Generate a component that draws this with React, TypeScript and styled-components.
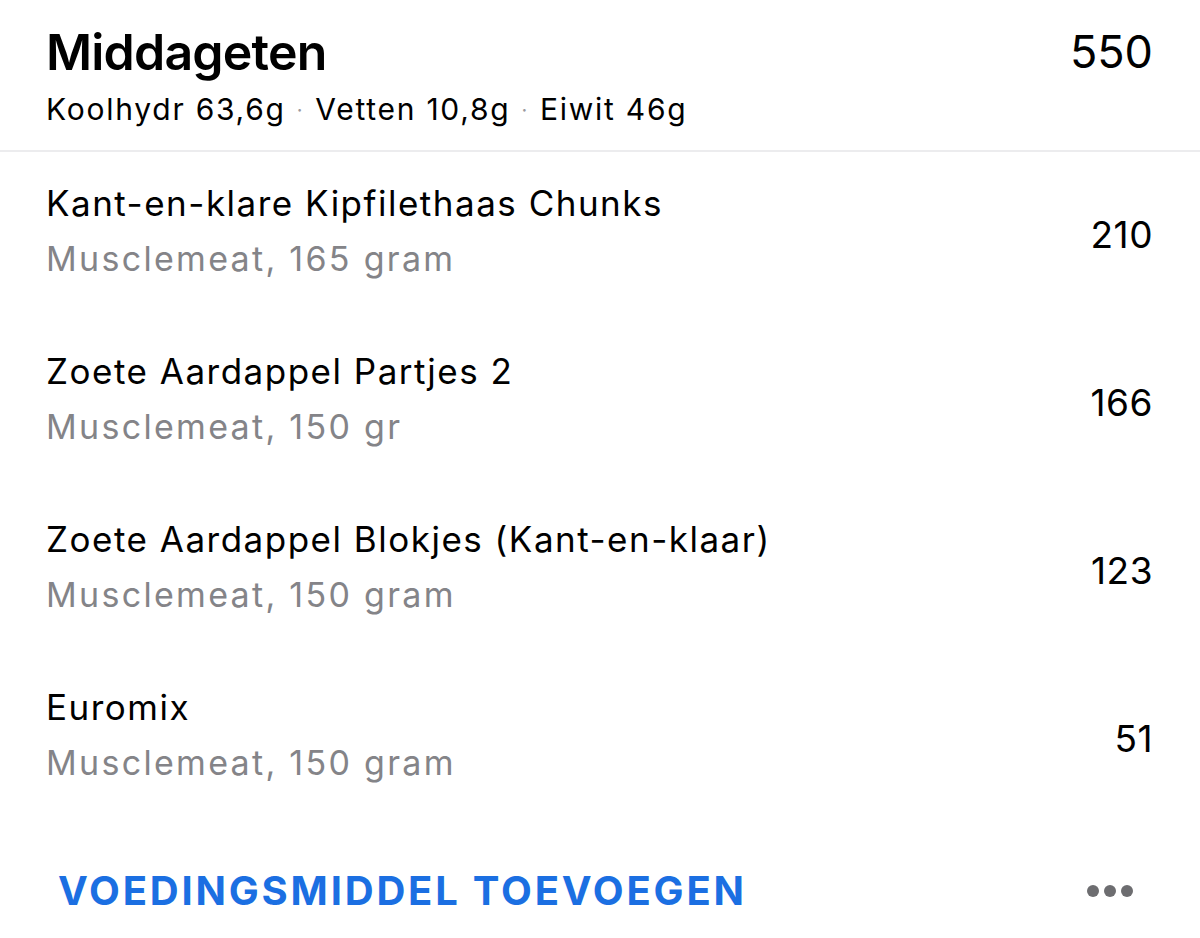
import React from "react";
import styled, { createGlobalStyle } from "styled-components";

const GlobalStyle = createGlobalStyle`
  html, body {
    margin: 0;
    padding: 0;
    background: #fff;
  }
  body {
    font-family: Inter, "Noto Sans", sans-serif;
    -webkit-font-smoothing: antialiased;
  }
`;

const Card = styled.div`
  display: flex;
  flex-direction: column;
  width: 1200px;
  background: #fff;
`;

const Header = styled.header`
  display: flex;
  justify-content: space-between;
  align-items: flex-start;
  padding: 22px 47px 20px 46px;
  border-bottom: 2px solid #ececee;
`;

const HeaderText = styled.div`
  display: flex;
  flex-direction: column;
  gap: 7px;
`;

const Title = styled.h1`
  margin: 0;
  font-size: 50px;
  font-weight: 600;
  line-height: 60px;
  letter-spacing: -0.8px;
  color: #000;
`;

const Macros = styled.div`
  font-size: 30px;
  line-height: 40px;
  letter-spacing: 1.75px;
  color: #000;
`;

const Sep = styled.span`
  color: #9a9a9e;
  margin: 0 11px;
  font-size: 20px;
  vertical-align: 3px;
`;

const Total = styled.div`
  font-size: 45px;
  line-height: 60px;
  color: #000;
`;

const FoodRow = styled.div`
  display: flex;
  justify-content: space-between;
  align-items: center;
  padding: 31px 47px 41px 46px;
`;

const Info = styled.div`
  display: flex;
  flex-direction: column;
  gap: 16px;
`;

const Name = styled.div`
  font-size: 35px;
  line-height: 40px;
  letter-spacing: 1.5px;
  color: #000;
`;

const Detail = styled.div`
  font-size: 34px;
  line-height: 40px;
  letter-spacing: 2.3px;
  color: #848488;
`;

const Kcal = styled.div`
  font-size: 37px;
  line-height: 40px;
  letter-spacing: 0.5px;
  padding-top: 8px;
  color: #000;
`;

const Footer = styled.div`
  display: flex;
  justify-content: space-between;
  align-items: center;
  height: 134px;
  padding: 0 67px 0 58px;
`;

const AddButton = styled.button`
  border: none;
  background: none;
  padding: 0;
  font-family: inherit;
  font-size: 40px;
  font-weight: 700;
  line-height: 48px;
  letter-spacing: 2.8px;
  color: #1b6fe2;
  cursor: pointer;
`;

const MoreDots = styled.div`
  display: flex;
  gap: 5px;
`;

const Dot = styled.span`
  width: 12px;
  height: 12px;
  border-radius: 50%;
  background: #6d6d70;
`;

const foods = [
  { name: "Kant-en-klare Kipfilethaas Chunks", detail: "Musclemeat, 165 gram", kcal: 210 },
  { name: "Zoete Aardappel Partjes 2", detail: "Musclemeat, 150 gr", kcal: 166 },
  { name: "Zoete Aardappel Blokjes (Kant-en-klaar)", detail: "Musclemeat, 150 gram", kcal: 123 },
  { name: "Euromix", detail: "Musclemeat, 150 gram", kcal: 51 },
];

export default function App() {
  return (
    <>
      <GlobalStyle />
      <Card>
        <Header>
          <HeaderText>
            <Title>Middageten</Title>
            <Macros>
              Koolhydr 63,6g<Sep>·</Sep>Vetten 10,8g<Sep>·</Sep>Eiwit 46g
            </Macros>
          </HeaderText>
          <Total>550</Total>
        </Header>
        {foods.map((f) => (
          <FoodRow key={f.name}>
            <Info>
              <Name>{f.name}</Name>
              <Detail>{f.detail}</Detail>
            </Info>
            <Kcal>{f.kcal}</Kcal>
          </FoodRow>
        ))}
        <Footer>
          <AddButton>VOEDINGSMIDDEL TOEVOEGEN</AddButton>
          <MoreDots>
            <Dot />
            <Dot />
            <Dot />
          </MoreDots>
        </Footer>
      </Card>
    </>
  );
}
